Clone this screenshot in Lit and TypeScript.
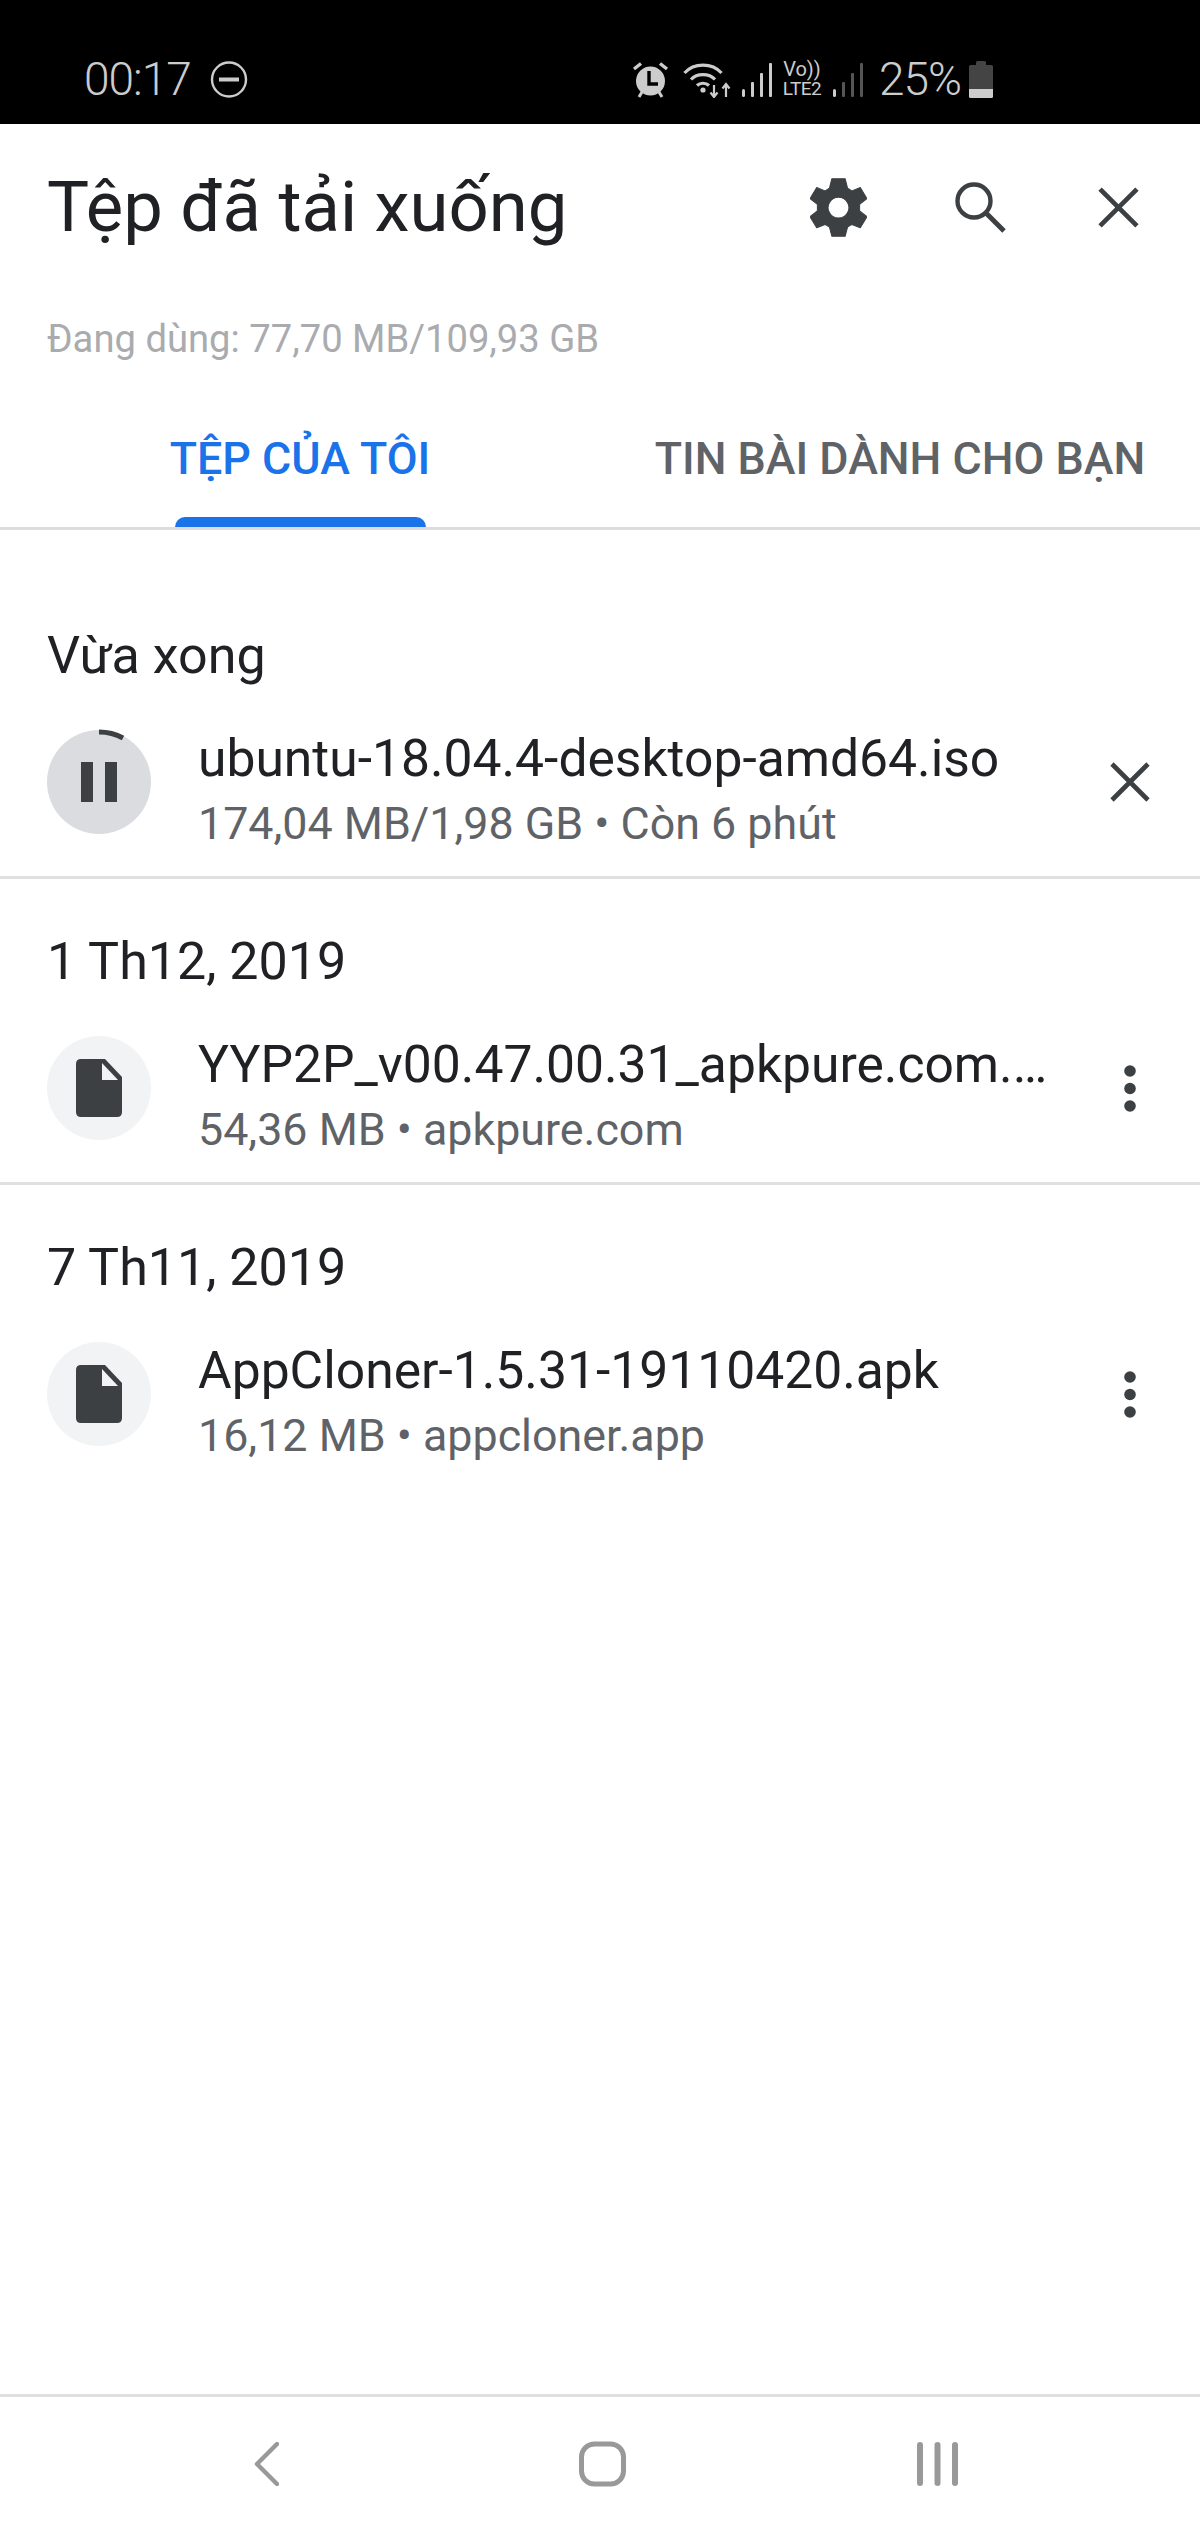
import { LitElement, html, css, svg } from "lit";
import { customElement } from "lit/decorators.js";

type Row = { name: string; sub: string; active?: boolean };
type Group = { title: string; row: Row };

const groups: Group[] = [
  { title: "Vừa xong", row: { name: "ubuntu-18.04.4-desktop-amd64.iso", sub: "174,04 MB/1,98 GB • Còn 6 phút", active: true } },
  { title: "1 Th12, 2019", row: { name: "YYP2P_v00.47.00.31_apkpure.com.…", sub: "54,36 MB • apkpure.com" } },
  { title: "7 Th11, 2019", row: { name: "AppCloner-1.5.31-19110420.apk", sub: "16,12 MB • appcloner.app" } },
];

const bars = (dim: boolean) => svg`
  <rect x="0" y="28" width="3" height="8" rx="1.5" fill="#ccc"></rect>
  <rect x="9" y="21" width="3" height="15" rx="1" fill=${dim ? "#555" : "#ccc"}></rect>
  <rect x="18" y="12" width="3" height="24" rx="1" fill=${dim ? "#555" : "#ccc"}></rect>
  <rect x="27" y="2" width="3" height="34" rx="1" fill=${dim ? "#555" : "#ccc"}></rect>`;

@customElement("app-root")
export class AppRoot extends LitElement {
  static styles = css`
    :host {
      display: flex;
      flex-direction: column;
      min-height: 100vh;
      background: #fff;
      font-family: Roboto, "Noto Sans", sans-serif;
      color: #202124;
    }
    svg {
      display: block;
      flex: none;
    }
    .status {
      height: 124px;
      background: #000;
      color: #ccc;
      display: flex;
      align-items: center;
      padding: 34px 207px 0 84px;
      box-sizing: border-box;
    }
    .clock {
      font-size: 46px;
      font-weight: 300;
      letter-spacing: -1px;
      line-height: 50px;
    }
    .dnd {
      margin-left: 19px;
    }
    .spacer {
      flex: 1;
    }
    .wifi {
      margin-left: 14px;
    }
    .sig1 {
      margin-left: 11px;
    }
    .volte {
      margin-left: 8px;
      width: 44px;
      display: flex;
      flex-direction: column;
      align-items: center;
      line-height: 19px;
      white-space: nowrap;
    }
    .volte .vo {
      font-size: 20px;
    }
    .volte .lte {
      font-size: 19px;
      letter-spacing: -0.5px;
    }
    .sig2 {
      margin-left: 9px;
    }
    .pct {
      margin-left: 16px;
      font-size: 46px;
      font-weight: 300;
      letter-spacing: -1px;
      line-height: 50px;
    }
    .batt {
      margin-left: 8px;
    }
    .head {
      display: flex;
      align-items: center;
      height: 166px;
      padding: 0 61px 0 47px;
    }
    h1 {
      flex: 1;
      margin: 0;
      font-size: 70.600px;
      font-weight: 400;
      line-height: 90px;
      white-space: nowrap;
    }
    .search {
      margin: 0 92px 0 88px;
    }
    .storage {
      padding: 0 47px;
      font-size: 38.200px;
      line-height: 50px;
      height: 50px;
      margin-top: 24px;
      color: #a9abae;
    }
    .tabs {
      display: grid;
      grid-template-columns: 1fr 1fr;
      margin-top: 65px;
      border-bottom: 3px solid #dadce0;
    }
    .tab {
      display: flex;
      flex-direction: column;
      align-items: center;
      font-size: 44.800px;
      font-weight: 500;
      line-height: 60px;
      color: #5f6368;
      white-space: nowrap;
    }
    .tab.on {
      color: #1a73e8;
    }
    .bar {
      width: 251px;
      height: 10px;
      margin-top: 28px;
      border-radius: 10px 10px 0 0;
    }
    .tab.on .bar {
      background: #1a73e8;
    }
    main {
      flex: 1;
      padding-top: 43px;
    }
    section {
      padding: 53px 0 20px;
      border-bottom: 3px solid #e0e0e0;
    }
    section:last-child {
      border-bottom: none;
    }
    h2 {
      margin: 0 0 44px;
      padding: 0 47px;
      font-size: 52px;
      font-weight: 400;
      line-height: 60px;
    }
    .row {
      display: flex;
      align-items: flex-start;
      padding: 0 50px 0 47px;
    }
    .ico {
      width: 104px;
      height: 104px;
      border-radius: 50%;
      background: #f1f3f4;
      flex: none;
      display: flex;
      align-items: center;
      justify-content: center;
    }
    .ico.active {
      background: #dadce0;
    }
    .txt {
      flex: 1;
      min-width: 0;
      margin: -4px 0 0 47px;
    }
    .name {
      font-size: 51.600px;
      line-height: 65px;
      white-space: nowrap;
      overflow: hidden;
      text-overflow: ellipsis;
    }
    .sub {
      font-size: 44.800px;
      line-height: 65px;
      color: #5f6368;
      white-space: nowrap;
    }
    .act {
      width: 40px;
      height: 104px;
      flex: none;
      display: flex;
      align-items: center;
      justify-content: center;
    }
    nav {
      display: flex;
      align-items: center;
      border-top: 3px solid #e0e0e0;
      height: 139px;
      box-sizing: border-box;
      padding: 0 0 3px 254px;
    }
    .home {
      margin: 0 291px 0 300px;
    }
  `;

  gear() {
    return html`<svg width="57" height="59" viewBox="150 82 170 175">
      <path fill="#3c4043" fill-rule="evenodd" stroke="#3c4043" stroke-width="3" stroke-linejoin="round"
        d="M215 84h40l7 28 13 8 25-10 20 33-22 17v20l22 17-20 33-25-10-13 8-7 27h-40l-7-27-13-8-25 10-20-33 22-17v-20l-22-17 20-33 25 10 13-8z M235 139a31 31 0 1 0 .01 0z"></path>
    </svg>`;
  }

  close(size: number) {
    return html`<svg width=${size} height=${size} viewBox="0 0 40 40">
      <path d="M2 2L38 38M38 2L2 38" stroke="#3c4043" stroke-width="4.6" fill="none"></path>
    </svg>`;
  }

  dots() {
    return html`<svg width="12" height="47" viewBox="0 0 12 47">
      <circle cx="6" cy="6" r="5.8" fill="#3c4043"></circle>
      <circle cx="6" cy="23.5" r="5.8" fill="#3c4043"></circle>
      <circle cx="6" cy="41" r="5.8" fill="#3c4043"></circle>
    </svg>`;
  }

  statusBar() {
    return html`<div class="status">
      <span class="clock">00:17</span>
      <svg class="dnd" width="38" height="37" viewBox="0 0 38 37">
        <ellipse cx="19" cy="18.5" rx="17" ry="17" fill="none" stroke="#ccc" stroke-width="2.4"></ellipse>
        <rect x="9" y="16.5" width="20" height="4" fill="#ccc"></rect>
      </svg>
      <div class="spacer"></div>
      <svg width="37" height="37" viewBox="0 0 37 37">
        <circle cx="18.5" cy="20" r="14.5" fill="#ccc"></circle>
        <path d="M2 8L9 2.500M35 8L28 2.500" stroke="#ccc" stroke-width="3.4" fill="none"></path>
        <path d="M7 36L10 31M30 36L27 31" stroke="#ccc" stroke-width="3" fill="none"></path>
        <path d="M17 10V23H26" stroke="#000" stroke-width="3.4" fill="none"></path>
      </svg>
      <svg class="wifi" width="48" height="37" viewBox="0 0 48 37">
        <path d="M1.500 12C11 1.500 29 1.500 38.500 12" stroke="#ccc" stroke-width="3.2" fill="none"></path>
        <path d="M8 18.500C14 12 26 12 32 18.500" stroke="#ccc" stroke-width="3.2" fill="none"></path>
        <path d="M14 24.500C17 21.500 23 21.500 26 24.500" stroke="#ccc" stroke-width="3.2" fill="none"></path>
        <circle cx="20" cy="29" r="2.600" fill="#ccc"></circle>
        <path d="M31 24V36M27.500 31.500L31 36L34.500 31.500" stroke="#ccc" stroke-width="2.200" fill="none"></path>
        <path d="M43 36V23M39.500 27.500L43 23L46.500 27.500" stroke="#ccc" stroke-width="2.200" fill="none"></path>
      </svg>
      <svg class="sig1" width="30" height="36" viewBox="0 0 30 36">${bars(false)}</svg>
      <div class="volte"><span class="vo">Vo))</span><span class="lte">LTE2</span></div>
      <svg class="sig2" width="30" height="36" viewBox="0 0 30 36">${bars(true)}</svg>
      <span class="pct">25%</span>
      <svg class="batt" width="24" height="37" viewBox="0 0 24 37">
        <path d="M7 4V1.500Q7 0 8.500 0H15.500Q17 0 17 1.500V4H22.500Q24 4 24 5.500V28H0V5.500Q0 4 1.500 4z" fill="#444"></path>
        <path d="M0 28H24V35.500Q24 37 22.500 37H1.500Q0 37 0 35.500z" fill="#ccc"></path>
      </svg>
    </div>`;
  }

  rowIcon(r: Row) {
    if (r.active) {
      return html`<div class="ico active">
        <svg width="104" height="104" viewBox="0 0 104 104" style="overflow:visible">
          <rect x="34" y="32" width="12" height="40" fill="#3c4043"></rect>
          <rect x="58" y="32" width="12" height="40" fill="#3c4043"></rect>
          <path d="M52 2A50 50 0 0 1 76 8" stroke="#3c4043" stroke-width="5" fill="none"></path>
        </svg>
      </div>`;
    }
    return html`<div class="ico">
      <svg width="46" height="58" viewBox="0 0 46 58">
        <path fill="#3c4043" d="M5 0H29L46 18V53Q46 58 41 58H5Q0 58 0 53V5Q0 0 5 0z"></path>
        <path fill="#f1f3f4" d="M26 4L42 21H26z"></path>
      </svg>
    </div>`;
  }

  render() {
    return html`
      ${this.statusBar()}
      <header class="head">
        <h1>Tệp đã tải xuống</h1>
        ${this.gear()}
        <svg class="search" width="51" height="51" viewBox="0 0 51 51">
          <circle cx="19" cy="19" r="16.500" stroke="#3c4043" stroke-width="4.400" fill="none"></circle>
          <path d="M31 31L49 49" stroke="#3c4043" stroke-width="5" fill="none"></path>
        </svg>
        ${this.close(41)}
      </header>
      <div class="storage">Đang dùng: 77,70 MB/109,93 GB</div>
      <div class="tabs">
        <div class="tab on">TỆP CỦA TÔI<div class="bar"></div></div>
        <div class="tab">TIN BÀI DÀNH CHO BẠN<div class="bar"></div></div>
      </div>
      <main>
        ${groups.map(
          (g) => html`<section>
            <h2>${g.title}</h2>
            <div class="row">
              ${this.rowIcon(g.row)}
              <div class="txt">
                <div class="name">${g.row.name}</div>
                <div class="sub">${g.row.sub}</div>
              </div>
              <div class="act">${g.row.active ? this.close(40) : this.dots()}</div>
            </div>
          </section>`
        )}
      </main>
      <nav>
        <svg width="25" height="44" viewBox="0 0 25 44">
          <path d="M23 2L3 22L23 42" stroke="#999" stroke-width="4.500" stroke-linecap="round" stroke-linejoin="round" fill="none"></path>
        </svg>
        <svg class="home" width="47" height="46" viewBox="0 0 47 46">
          <rect x="2.500" y="3" width="42" height="40" rx="13" stroke="#999" stroke-width="5" fill="none"></rect>
        </svg>
        <svg width="41" height="44" viewBox="0 0 41 44">
          <rect x="0" y="0" width="6" height="44" rx="3" fill="#999"></rect>
          <rect x="17.500" y="0" width="6" height="44" rx="3" fill="#999"></rect>
          <rect x="35" y="0" width="6" height="44" rx="3" fill="#999"></rect>
        </svg>
      </nav>
    `;
  }
}
